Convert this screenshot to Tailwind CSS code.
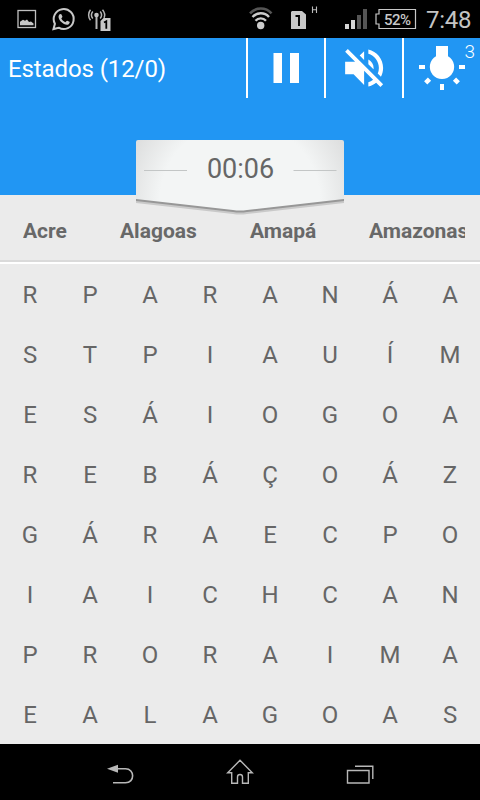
<!DOCTYPE html>
<html lang="pt-BR">
<head>
  <meta charset="UTF-8" />
  <meta name="viewport" content="width=device-width, initial-scale=1.0"/>
  <title>Caça Palavras - Estados</title>
  <script src="https://cdn.jsdelivr.net/npm/@tailwindcss/browser@4"></script>
  <style>
    body {
      font-family: Roboto, sans-serif;
    }
  </style>
</head>
<body class="bg-black">
  <div class="w-[480px] h-[800px] flex flex-col overflow-hidden bg-[#ebebeb]">

    <!-- Status bar -->
    <div class="h-[38px] shrink-0 bg-black flex justify-between">
      <svg class="w-[120px] h-[38px]" viewBox="0 0 120 38" fill="none">
        <rect x="18" y="10.5" width="17.5" height="17" stroke="#c0c0c0" stroke-width="1.3"/>
        <path d="M20 25.3v-3.5l3-2 2 1 2-1.3 2 2.5 2-.5 2.5 2v1.8z" fill="#c8c8c8"/>
        <path d="M53.5 29l1.4-5.2a10 10 0 1 1 3.8 3.9z" stroke="#c8c8c8" stroke-width="2"/>
        <path d="M59.3 14.5c.9-.9 1.9-.7 2.2 0l.9 2.1c.2.7-.8 1.4-1.1 1.900.9 1.7 2.3 2.900 4.1 3.700.7-.4 1.2-1.6 1.900-1.5l2.2 1.1c.6.4-.1 2.1-1.1 2.700-2.1 1.1-5.1-.6-7.1-2.500-2.200-2.200-3.700-5.200-2-7.500z" fill="#c8c8c8"/>
        <g stroke="#b5b5b5" stroke-width="1.5">
          <path d="M96.5 16v13" stroke-width="2"/>
          <path d="M92.8 11.5c-1.6 2-1.6 5 0 7M100.2 11.5c1.6 2 1.6 5 0 7M90.5 9.8c-2.5 3-2.5 7.500 0 10.500M102.5 9.800c2.500 3 2.500 6 1.500 8"/>
        </g>
        <circle cx="96.5" cy="15" r="2.3" fill="#c0c0c0"/>
        <path d="M103.5 18h7v13h-10v-10z" fill="#c8c8c8"/>
        <path d="M104 22.5l2.3-1.2v7.5" stroke="#000" stroke-width="1.8"/>
      </svg>
      <div class="flex">
        <svg class="w-[130px] h-[38px]" viewBox="240 0 130 38" fill="none">
          <path d="M250 13.3a14.5 14.5 0 0 1 21.5 0" stroke="#555" stroke-width="2.6"/>
          <path d="M252.5 17a11 11 0 0 1 16.5 0" stroke="#ccc" stroke-width="2.4"/>
          <path d="M255.5 20.8a7 7 0 0 1 10.5 0" stroke="#ccc" stroke-width="2.3"/>
          <circle cx="260.7" cy="25.5" r="3.7" fill="#ccc"/>
          <path d="M292 11h10l4 3.5v14.5h-15v-17z" fill="#c8c8c8"/>
          <path d="M295.5 16h3.5v10" stroke="#000" stroke-width="1.9"/>
          <path d="M312.5 6.5v6.5M316.5 6.5v6.5M312.5 9.7h4" stroke="#bbb" stroke-width="1.1"/>
          <path d="M345 24h4v5h-4zM351 20h4v9h-4z" fill="#d5d5d5"/>
          <path d="M357 15h4v14h-4zM363 9h4v20h-4z" fill="#555"/>
        </svg>
        <div class="relative w-[50px] h-[38px]">
          <svg class="w-[50px] h-[38px]" viewBox="370 0 50 38" fill="none">
            <path d="M379 9.5h36.5v19h-36.5v-4.5h-3v-10h3z" stroke="#c8c8c8" stroke-width="1.2"/>
          </svg>
          <span class="absolute left-[14px] top-[11px] text-[15px] leading-[18px] font-medium text-[#c8c8c8] tracking-[-0.5px]">52%</span>
        </div>
        <span class="w-[60px] pl-[6px] text-[24px] leading-[40px] text-[#c4c4c4] tracking-[-0.3px]">7:48</span>
      </div>
    </div>

    <!-- Toolbar and timer -->
    <header class="relative h-[157px] shrink-0 bg-[#2196f3] text-white flex justify-between items-start">
      <h1 class="pl-2 text-[24px] leading-[62px] tracking-[-0.1px]">Estados (12/0)</h1>
      <div class="flex h-[60px]">
        <button class="w-[78px] border-l-2 border-white">
          <svg class="w-[76px] h-[60px]" viewBox="248 38 76 60" fill="#fff">
            <path d="M273.5 53h8.5v30h-8.5zM290 53h9v30h-9z"/>
          </svg>
        </button>
        <button class="w-[78px] border-l-2 border-white">
          <svg class="w-[76px] h-[60px]" viewBox="326 38 76 60">
            <g transform="translate(338.8 42.7) scale(2.11)" fill="#fff">
              <path d="M16.5 12c0-1.77-1.02-3.29-2.5-4.03v2.21l2.45 2.45c.03-.2.05-.41.05-.63zm2.5 0c0 .94-.2 1.82-.54 2.64l1.51 1.51C20.63 14.91 21 13.5 21 12c0-4.28-2.99-7.86-7-8.77v2.06c2.89.86 5 3.54 5 6.71zM4.27 3L3 4.27 7.73 9H3v6h4l5 5v-6.73l4.25 4.25c-.67.52-1.42.93-2.25 1.18v2.06c1.38-.31 2.63-.95 3.69-1.81L19.73 21 21 19.73l-9-9L4.27 3zM12 4L9.91 6.09 12 8.18V4z"/>
            </g>
          </svg>
        </button>
        <button class="relative w-[78px] border-l-2 border-white">
          <svg class="w-[76px] h-[60px]" viewBox="404 38 76 60" fill="#fff">
            <path d="M436 46h12v10.3a12.2 12.2 0 1 1-12 0z"/>
            <path d="M419 65h6v4h-6zM459 65h6v4h-6zM440 84h4v6h-4z"/>
            <path d="M427.900 77.500l3.200 3.200-3.800 3.800-3.200-3.200zM456.100 77.500l3.800 3.800-3.200 3.200-3.800-3.800z"/>
          </svg>
          <span class="absolute right-[5px] top-[4px] text-[19px] leading-[20px] font-light">3</span>
        </button>
      </div>

      <!-- Timer tag hangs over the word list -->
      <div class="absolute left-[136px] top-[102px] w-[208px] h-[76px]">
        <svg class="absolute inset-0" width="208" height="76" viewBox="0 0 208 76">
          <defs>
            <radialGradient id="tagShade" gradientUnits="userSpaceOnUse" cx="104" cy="62" r="118">
              <stop offset="0.68" stop-color="#f3f5f5"/>
              <stop offset="1" stop-color="#dedfdf"/>
            </radialGradient>
          </defs>
          <path d="M0 59.5L104 71.5 208 59.5V63L111 74q-7 1-14 0L0 63z" fill="#c9c9c9"/>
          <path d="M0 58L104 70 208 58V61L111 72q-7 1-14 0L0 61z" fill="#979797"/>
          <path d="M0 2q0-2 2-2h204q2 0 2 2v57L111 70q-7 1-14 0L0 59z" fill="url(#tagShade)"/>
          <path d="M8 30.5h43M157.5 30.5h43" stroke="#c3c6c6"/>
        </svg>
        <span class="absolute inset-x-0 top-0 pl-px text-center text-[27px] leading-[58px] text-[#666]">00:06</span>
      </div>
    </header>

    <!-- Words to find -->
    <div class="h-[69px] shrink-0 border-b-2 border-white">
      <div class="h-[67px] border-b-2 border-[#dadada] pl-[23px] pr-[15px]">
        <ul class="flex overflow-hidden pt-[22px] text-[21px] leading-[28px] font-bold text-[#686868]">
          <li class="w-[97px] shrink-0">Acre</li>
          <li class="w-[130px] shrink-0">Alagoas</li>
          <li class="w-[119px] shrink-0">Amapá</li>
          <li class="shrink-0">Amazonas</li>
        </ul>
      </div>
    </div>

    <!-- Letter board, filled by the script below -->
    <div id="board" class="h-[480px] shrink-0 grid grid-cols-8 grid-rows-8 text-center text-[24px] leading-[63px] text-[#666]"></div>

    <!-- Navigation bar -->
    <nav class="h-[56px] shrink-0 bg-black flex justify-center">
      <svg class="w-[120px] h-[56px]" viewBox="60 744 120 56" fill="none">
        <path d="M117 768.8h8.5c9.5 0 9.5 14 0 14H113" stroke="#b8b8b8" stroke-width="1.6"/>
        <path d="M107 768.8l11-4v8z" fill="#b8b8b8"/>
      </svg>
      <svg class="w-[120px] h-[56px]" viewBox="180 744 120 56" fill="none">
        <path d="M240 760.3l12.3 12.4h-4v10.6h-5.800v-6.300c0-3.300-5-3.300-5 0v6.300h-5.800v-10.600h-4z" stroke="#b8b8b8" stroke-width="1.4"/>
      </svg>
      <svg class="w-[120px] h-[56px]" viewBox="300 744 120 56" fill="none">
        <path d="M347.5 770.5h21.5v12.5h-21.500zM355 766.3h17.8v12.7" stroke="#b8b8b8" stroke-width="1.4"/>
      </svg>
    </nav>
  </div>

  <script>
    const rows = [
      "RPARANÁA",
      "STPIAUÍM",
      "ESÁIOGOA",
      "REBÁÇOÁZ",
      "GÁRAECPO",
      "IAICHCAN",
      "PRORAIMA",
      "EALAGOAS"
    ];

    const board = document.getElementById("board");
    rows.forEach(row => {
      [...row].forEach(letter => {
        const cell = document.createElement("div");
        cell.className = "h-[60px]";
        cell.textContent = letter;
        board.appendChild(cell);
      });
    });
  </script>
</body>
</html>
